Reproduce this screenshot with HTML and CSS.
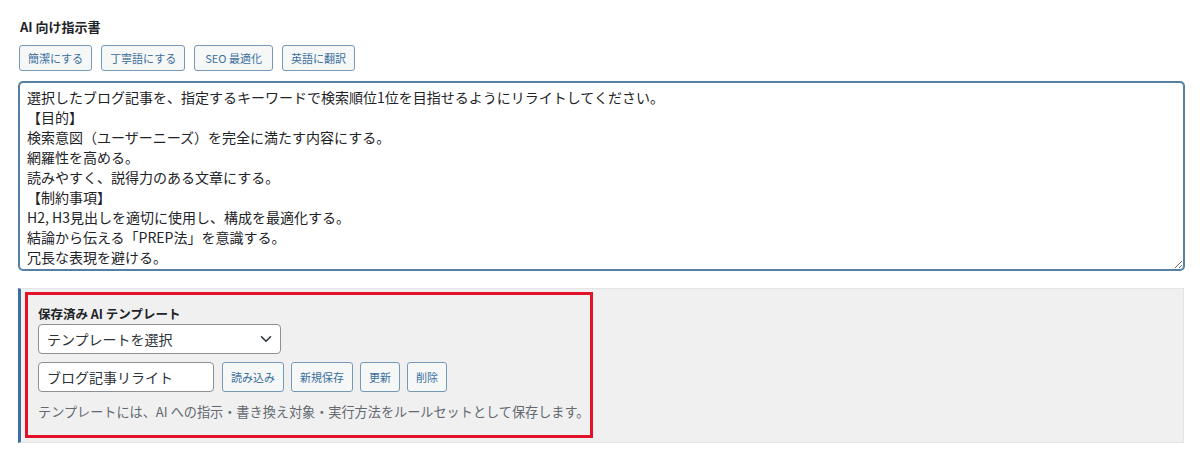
FILE: index.html
```html
<!DOCTYPE html>
<html lang="ja">
<head>
<meta charset="utf-8">
<title>AI 向け指示書</title>
<link rel="stylesheet" href="styles.css">
</head>
<body>
<div class="page">
  <h2 class="title">AI 向け指示書</h2>
  <div class="presets">
    <button class="btn">簡潔にする</button>
    <button class="btn">丁寧語にする</button>
    <button class="btn wide">SEO 最適化</button>
    <button class="btn">英語に翻訳</button>
  </div>
  <textarea class="prompt" spellcheck="false">選択したブログ記事を、指定するキーワードで検索順位1位を目指せるようにリライトしてください。
【目的】
検索意図（ユーザーニーズ）を完全に満たす内容にする。
網羅性を高める。
読みやすく、説得力のある文章にする。
【制約事項】
H2, H3見出しを適切に使用し、構成を最適化する。
結論から伝える「PREP法」を意識する。
冗長な表現を避ける。</textarea>
  <div class="panel">
    <div class="highlight">
      <div class="label">保存済み AI テンプレート</div>
      <div class="select">
        <span>テンプレートを選択</span>
        <svg class="chev" width="12" height="8" viewBox="0 0 12 8"><path d="M1.5 1.8 L6 6.2 L10.5 1.8" fill="none" stroke="#2c3338" stroke-width="1.6" stroke-linecap="round" stroke-linejoin="round"/></svg>
      </div>
      <div class="row">
        <div class="input">ブログ記事リライト</div>
        <button class="btn tall">読み込み</button>
        <button class="btn tall">新規保存</button>
        <button class="btn tall">更新</button>
        <button class="btn tall">削除</button>
      </div>
      <p class="help">テンプレートには、AI への指示・書き換え対象・実行方法をルールセットとして保存します。</p>
    </div>
  </div>
</div>
</body>
</html>
```

FILE: styles.css
```css
* { box-sizing: border-box; }
html, body {
  margin: 0;
  background: #ffffff;
}
body {
  font-family: "Noto Sans CJK JP", "Noto Sans", sans-serif;
  color: #1d2327;
}
.page {
  padding: 18px 16px 0 19px;
}
.title {
  margin: 0 0 0 1px;
  font-size: 13px;
  line-height: 18px;
  font-weight: 700;
  color: #1d2327;
}
.presets {
  display: flex;
  gap: 9px;
  margin-top: 9px;
}
.btn {
  font-family: "Noto Sans CJK JP", "Noto Sans", sans-serif;
  font-size: 11px;
  line-height: 1;
  height: 26px;
  padding: 0 8px;
  color: #3a6f9e;
  background: #f6f7f7;
  border: 1px solid #7799b9;
  border-radius: 3px;
  display: inline-flex;
  align-items: center;
  cursor: pointer;
}
.btn.wide {
  padding: 0 10px;
}
.btn.tall {
  height: 30px;
}
.prompt {
  display: block;
  margin-top: 11px;
  width: 1165px;
  height: 188px;
  padding: 4px 7px;
  font-family: "Noto Sans CJK JP", "Noto Sans", sans-serif;
  font-size: 14px;
  line-height: 20px;
  color: #1d2327;
  border: 1px solid #557fa3;
  box-shadow: 0 0 0 1px #557fa3;
  border-radius: 4px;
  overflow: hidden;
  outline: none;
}
.panel {
  margin-top: 18px;
  margin-left: -1px;
  width: 1166px;
  height: 155px;
  background: #f0f0f1;
  border: 1px solid #e2e4e7;
  border-left: 3px solid #3b6ea5;
  padding: 3px 0 0 4px;
}
.highlight {
  width: 568px;
  height: 146px;
  border: 3px solid #e3122b;
  padding: 11px 0 0 10px;
}
.label {
  font-size: 12.5px;
  font-weight: 700;
  line-height: 16px;
  color: #1d2327;
}
.select {
  margin-top: 2px;
  width: 243px;
  height: 30px;
  background: #ffffff;
  border: 1px solid #8c8f94;
  border-radius: 4px;
  display: flex;
  align-items: center;
  justify-content: space-between;
  padding: 0 8px 0 8px;
  font-size: 14px;
  color: #2c3338;
}
.row {
  display: flex;
  gap: 7px;
  margin-top: 8px;
  align-items: center;
}
.input {
  width: 176px;
  height: 30px;
  margin-right: 1px;
  background: #ffffff;
  border: 1px solid #8c8f94;
  border-radius: 4px;
  display: flex;
  align-items: center;
  padding: 0 8px;
  font-size: 14px;
  color: #2c3338;
}
.help {
  margin: 11px 0 0 0;
  font-size: 13.15px;
  line-height: 18px;
  color: #646970;
  white-space: nowrap;
}
```
